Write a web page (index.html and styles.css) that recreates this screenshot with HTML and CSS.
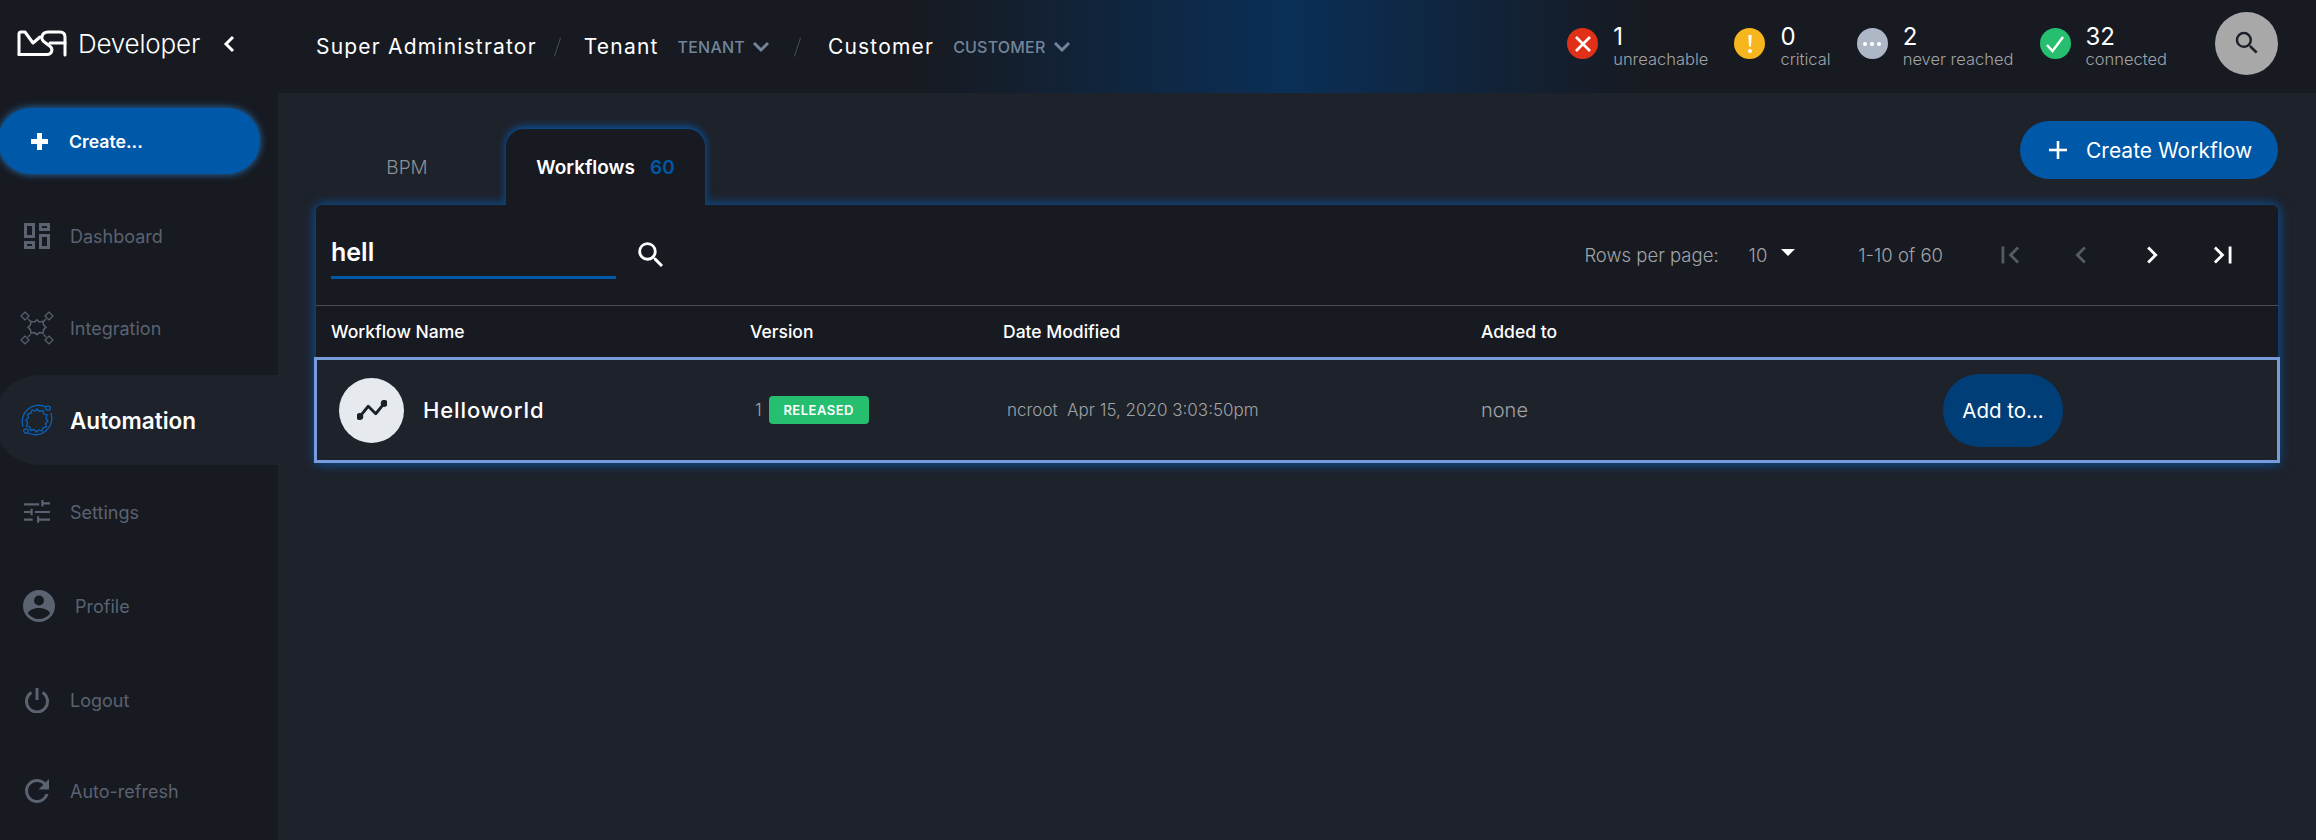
FILE: index.html
```html
<!DOCTYPE html>
<html lang="en">
<head>
    <meta charset="UTF-8">
    <title>MSActivator Developer</title>
    <link rel="stylesheet" href="styles.css">
</head>
<body>
    <header class="topbar">
        <div class="brand">
            <svg class="brand-logo" width="50" height="28" viewBox="0 0 50 28" fill="none" stroke="currentColor" stroke-width="3" stroke-linejoin="round" stroke-linecap="round">
                <path d="M2 24.500V4q0-2 2-2h4l8 11 7-6"></path>
                <path d="M2 24.500h28c5 0 7-6 2-9l-4-3c-5-3-4-10 3-10.500h12q5 0 5 5v18"></path>
                <path d="M33 13h15"></path>
            </svg>
            <span class="brand-name">Developer</span>
            <svg class="brand-toggle" width="14" height="20" viewBox="0 0 14 20" fill="none" stroke="currentColor" stroke-width="3"><polyline points="11 3 4 10 11 17"></polyline></svg>
        </div>
        <nav class="crumbs">
            <span class="crumb">Super Administrator</span>
            <span class="crumb-sep"></span>
            <span class="crumb">Tenant</span>
            <span class="crumb-select">TENANT
                <svg width="18" height="12" viewBox="0 0 18 12" fill="none" stroke="currentColor" stroke-width="3"><polyline points="2 2 9 9 16 2"></polyline></svg>
            </span>
            <span class="crumb-sep"></span>
            <span class="crumb">Customer</span>
            <span class="crumb-select">CUSTOMER
                <svg width="18" height="12" viewBox="0 0 18 12" fill="none" stroke="currentColor" stroke-width="3"><polyline points="2 2 9 9 16 2"></polyline></svg>
            </span>
        </nav>
        <div class="statuses">
            <div class="status status-red">
                <span class="status-dot"><svg width="20" height="20" viewBox="0 0 20 20" stroke="#fff" stroke-width="2.600"><line x1="3" y1="3" x2="17" y2="17"></line><line x1="17" y1="3" x2="3" y2="17"></line></svg></span>
                <div class="status-text"><b>1</b><small>unreachable</small></div>
            </div>
            <div class="status status-amber">
                <span class="status-dot"><svg width="20" height="24" viewBox="0 0 20 24" fill="#fff"><path d="M8.300 3h3.400l-.7 11.500H9z"></path><circle cx="10" cy="19" r="2"></circle></svg></span>
                <div class="status-text"><b>0</b><small>critical</small></div>
            </div>
            <div class="status status-grey">
                <span class="status-dot"><svg width="20" height="6" viewBox="0 0 20 6" fill="#fff"><circle cx="3" cy="3" r="2"></circle><circle cx="10" cy="3" r="2"></circle><circle cx="17" cy="3" r="2"></circle></svg></span>
                <div class="status-text"><b>2</b><small>never reached</small></div>
            </div>
            <div class="status status-green">
                <span class="status-dot"><svg width="22" height="20" viewBox="0 0 22 20" fill="none" stroke="#fff" stroke-width="2.400"><polyline points="3 11 8.500 17 19 3"></polyline></svg></span>
                <div class="status-text"><b>32</b><small>connected</small></div>
            </div>
            <button class="top-search" type="button" aria-label="Search">
                <svg width="30" height="30" viewBox="0 0 24 24" fill="#1b1f27"><path d="M15.500 14h-.79l-.28-.27A6.470 6.470 0 0 0 16 9.500 6.500 6.500 0 1 0 9.500 16c1.610 0 3.090-.59 4.230-1.570l.27.28v.79l5 4.990L20.490 19l-4.990-5zm-6 0C7.010 14 5 11.990 5 9.500S7.010 5 9.500 5 14 7.010 14 9.500 11.990 14 9.500 14z"></path></svg>
            </button>
        </div>
    </header>

    <div class="layout">
        <aside class="sidebar">
            <button class="create-btn" type="button">
                <svg width="17" height="17" viewBox="0 0 17 17" fill="#fff"><path d="M6 0h5v6h6v5h-6v6H6v-6H0V6h6z"></path></svg>
                Create...
            </button>
            <ul class="side-nav">
                <li class="side-item">
                    <svg class="side-icon" width="26" height="26" viewBox="0 0 26 26" fill="none" stroke="currentColor" stroke-width="3"><rect x="1.500" y="1.500" width="8" height="12"></rect><rect x="16.500" y="1.500" width="8" height="5"></rect><rect x="1.500" y="19.500" width="8" height="5"></rect><rect x="16.500" y="12.500" width="8" height="12"></rect></svg>
                    Dashboard
                </li>
                <li class="side-item">
                    <svg class="side-icon side-icon-wide" width="34" height="34" viewBox="0 0 34 34" fill="none" stroke="currentColor" stroke-width="1.200">
                        <path d="M17 10l2 2 3-.6.600 3 2 2-2 2-.6 3-3-.6-2 2-2-2-3 .6-.6-3-2-2 2-2 .6-3 3 .6z" transform="translate(17 17) scale(1.180) translate(-17 -17)"></path>
                        <path d="M5 1l4 4-4 4-4-4zM29 1l4 4-4 4-4-4zM5 25l4 4-4 4-4-4zM29 25l4 4-4 4-4-4z"></path>
                        <path d="M8 8l2.500 2.500M26 8l-2.500 2.500M8 26l2.500-2.500M26 26l-2.500-2.500"></path>
                    </svg>
                    Integration
                </li>
                <li class="side-item side-item-active">
                    <svg class="side-icon side-icon-wide" width="34" height="34" viewBox="0 0 34 34" fill="none" stroke="#0a62b8" stroke-width="1.300">
                        <path d="M17 6l2.500 2.500 3.400-.9.900 3.400 3.200 1-1 3.400L28 18l-2.500 2.500.9 3.400-3.400.9-1 3.200-3.400-1L16.500 29 14 26.500l-3.400.9-.9-3.400-3.200-1 1-3.400L6 17l2.500-2.500-.9-3.400 3.400-.9 1-3.200 3.400 1z"></path>
                        <path d="M26 4A16.500 16.500 0 0 0 3 24"></path>
                        <path d="M8 30A16.500 16.500 0 0 0 31 10"></path>
                        <circle cx="28" cy="5" r="2.200"></circle>
                        <circle cx="6" cy="28" r="2.200"></circle>
                    </svg>
                    Automation
                </li>
                <li class="side-item">
                    <svg class="side-icon" width="26" height="24" viewBox="0 0 24 22" fill="currentColor"><path d="M0 17v2h8v-2H0zM0 3v2h14V3H0zm14 18v-2h10v-2H14v-2h-2v6h2zM6 8v2H0v2h6v2h2V8H6zm18 4v-2H10v2h14zM16 6h2V4h6V2h-6V0h-2v6z"></path></svg>
                    Settings
                </li>
                <li class="side-item side-item-profile">
                    <svg class="side-icon side-icon-profile" width="32" height="32" viewBox="0 0 32 32" fill="currentColor"><path d="M16 0a16 16 0 1 0 0 32 16 16 0 0 0 0-32zm0 5.500a5 5 0 1 1 0 10 5 5 0 0 1 0-10zm0 23.500c-4.500 0-8.500-2-11-5.500 0-3.500 7.400-5.500 11-5.500s11 2 11 5.500c-2.500 3.500-6.500 5.500-11 5.500z"></path></svg>
                    Profile
                </li>
                <li class="side-item side-item-logout">
                    <svg class="side-icon" width="26" height="26" viewBox="0 0 26 26" fill="none" stroke="currentColor" stroke-width="3"><path d="M13 1v12"></path><path d="M7.500 5.500a10.500 10.500 0 1 0 11 0"></path></svg>
                    Logout
                </li>
                <li class="side-item">
                    <svg class="side-icon side-icon-refresh" width="36" height="36" viewBox="0 0 24 24" fill="currentColor"><path d="M17.650 6.350A7.960 7.960 0 0 0 12 4a8 8 0 1 0 7.730 10h-2.080A6 6 0 1 1 12 6c1.660 0 3.140.69 4.220 1.780L13 11h7V4l-2.350 2.350z"></path></svg>
                    Auto-refresh
                </li>
            </ul>
        </aside>

        <main class="content">
            <div class="tabs-row">
                <div class="tabs">
                    <div class="tab tab-plain">BPM</div>
                    <div class="tab tab-active">Workflows <span class="tab-count">60</span></div>
                </div>
                <button class="add-workflow" type="button">
                    <svg width="20" height="20" viewBox="0 0 20 20" stroke="#fff" stroke-width="2.600"><line x1="10" y1="1" x2="10" y2="19"></line><line x1="1" y1="10" x2="19" y2="10"></line></svg>
                    Create Workflow
                </button>
            </div>

            <section class="card">
                <div class="toolbar">
                    <div class="search-field">hell</div>
                    <svg class="search-icon" width="34" height="34" viewBox="0 0 24 24" fill="#fff"><path d="M15.500 14h-.79l-.28-.27A6.470 6.470 0 0 0 16 9.500 6.500 6.500 0 1 0 9.500 16c1.610 0 3.090-.59 4.230-1.570l.27.28v.79l5 4.990L20.490 19l-4.990-5zm-6 0C7.010 14 5 11.990 5 9.500S7.010 5 9.500 5 14 7.010 14 9.500 11.990 14 9.500 14z"></path></svg>
                    <div class="pager">
                        <span class="pager-label">Rows per page:</span>
                        <span class="pager-size">10</span>
                        <span class="pager-caret"></span>
                        <span class="pager-range">1-10 of 60</span>
                        <div class="pager-btns">
                            <svg class="pager-off" width="34" height="34" viewBox="0 0 24 24" fill="currentColor"><path d="M18.410 16.590L13.820 12l4.590-4.590L17 6l-6 6 6 6zM6 6h2v12H6z"></path></svg>
                            <svg class="pager-off" width="34" height="34" viewBox="0 0 24 24" fill="currentColor"><path d="M15.410 7.410L14 6l-6 6 6 6 1.410-1.410L10.830 12z"></path></svg>
                            <svg width="34" height="34" viewBox="0 0 24 24" fill="currentColor"><path d="M10 6L8.590 7.410 13.170 12l-4.580 4.590L10 18l6-6z"></path></svg>
                            <svg width="34" height="34" viewBox="0 0 24 24" fill="currentColor"><path d="M5.590 7.410L10.180 12l-4.590 4.590L7 18l6-6-6-6zM16 6h2v12h-2z"></path></svg>
                        </div>
                    </div>
                </div>
                <div class="table-head">
                    <span class="col-name">Workflow Name</span>
                    <span class="col-version">Version</span>
                    <span class="col-date">Date Modified</span>
                    <span class="col-added">Added to</span>
                </div>
                <div class="table-row">
                    <div class="col-name row-name">
                        <span class="row-avatar">
                            <svg width="30" height="20" viewBox="0 0 32 20" fill="none" stroke="#1b1f27" stroke-width="3" stroke-linejoin="round" stroke-linecap="round"><polyline points="3 17 12 6 20 14 29 3"></polyline><circle cx="3" cy="17" r="2.200" fill="#1b1f27"></circle><circle cx="29" cy="3" r="2.200" fill="#1b1f27"></circle></svg>
                        </span>
                        Helloworld
                    </div>
                    <div class="col-version row-version">1 <span class="badge">RELEASED</span></div>
                    <div class="col-date row-date">ncroot&nbsp; Apr 15, 2020 3:03:50pm</div>
                    <div class="col-added row-added">none</div>
                    <button class="add-to" type="button">Add to...</button>
                </div>
            </section>
        </main>
    </div>
</body>
</html>
```

FILE: styles.css
```css
:root {
    --primary: #0058a8;
    --bar: #171a21;
    --surface: #1e222a;
    --muted: #5b6270;
    --text-grey: #a0a3a8;
}
* {
    box-sizing: border-box;
}
body {
    margin: 0;
    height: 840px;
    overflow: hidden;
    display: flex;
    flex-direction: column;
    background: var(--surface);
    color: #fff;
    font-family: 'Inter', 'Liberation Sans', sans-serif;
}
button {
    font-family: inherit;
    border: none;
    color: #fff;
}

/* top bar */
.topbar {
    height: 93px;
    flex: none;
    display: flex;
    align-items: center;
    background: linear-gradient(90deg, var(--bar) 920px, #0a2f57 1290px, var(--bar) 1640px);
}
.brand {
    width: 316px;
    flex: none;
    display: flex;
    align-items: center;
    padding-left: 17px;
    padding-bottom: 6px;
}
.brand-logo {
    flex: none;
}
.brand-name {
    margin-left: 11px;
    font-size: 26px;
    font-weight: 300;
    letter-spacing: -0.2px;
}
.brand-toggle {
    margin-left: 22px;
}
.crumbs {
    display: flex;
    align-items: center;
    font-size: 21px;
    font-weight: 400;
}
.crumb {
    letter-spacing: 1.2px;
}
.crumb-sep {
    width: 1px;
    height: 20px;
    margin: 0 26px 0 20px;
    background: #444a55;
    transform: rotate(18deg);
}
.crumb-select {
    display: flex;
    align-items: center;
    gap: 7px;
    margin-left: 19px;
    font-size: 16px;
    font-weight: 500;
    letter-spacing: 0.2px;
    color: #72859a;
}
.crumb-select + .crumb-sep {
    margin-left: 27px;
    margin-right: 30px;
}
.statuses {
    margin-left: auto;
    margin-right: 38px;
    display: flex;
    align-items: center;
}
.status {
    display: flex;
    align-items: center;
    gap: 15px;
    margin-right: 26px;
}
.status-dot {
    width: 31px;
    height: 31px;
    margin-bottom: 6px;
    border-radius: 50%;
    display: flex;
    align-items: center;
    justify-content: center;
}
.status-red .status-dot { background: #e03017; }
.status-amber .status-dot { background: #f8b61e; }
.status-grey .status-dot { background: #aeb7c6; }
.status-green .status-dot { background: #26bf6f; }
.status-text {
    display: flex;
    flex-direction: column;
    line-height: 1;
}
.status-text b {
    font-size: 24px;
    font-weight: 400;
}
.status-text small {
    margin-top: 2px;
    font-size: 16.500px;
    font-weight: 300;
    color: var(--text-grey);
}
.top-search {
    width: 63px;
    height: 63px;
    margin-left: 22px;
    margin-bottom: 7px;
    padding: 0;
    border-radius: 50%;
    background: #a8a8a8;
    display: flex;
    align-items: center;
    justify-content: center;
}

/* sidebar */
.layout {
    flex: 1;
    display: flex;
    min-height: 0;
}
.sidebar {
    width: 278px;
    flex: none;
    background: var(--bar);
    padding-top: 15px;
    overflow: hidden;
}
.create-btn {
    width: 262px;
    height: 66px;
    margin-left: -2px;
    padding: 0 0 0 33px;
    display: flex;
    align-items: center;
    gap: 21px;
    border-radius: 33px;
    background: var(--primary);
    box-shadow: 0 0 7px 1px rgba(42, 130, 210, 0.7);
    font-size: 17.700px;
    font-weight: 600;
}
.side-nav {
    list-style: none;
    margin: 16px 0 0;
    padding: 0;
}
.side-item {
    height: 92px;
    display: flex;
    align-items: center;
    gap: 20px;
    padding-left: 24px;
    font-size: 18px;
    color: var(--muted);
}
.side-icon-wide {
    margin-left: -4px;
    margin-right: -4px;
}
.side-icon-refresh {
    margin-left: -5px;
    margin-right: -5px;
}
.side-item-active {
    height: 90px;
    margin: 1px 0 1px -6px;
    padding-left: 30px;
    border-radius: 45px 0 0 45px;
    background: var(--surface);
    font-size: 22.500px;
    font-weight: 600;
    color: #fff;
}
.side-item-profile {
    margin-top: 2px;
    gap: 20px;
    padding-left: 23px;
}
.side-item-logout {
    margin-top: 2px;
    margin-bottom: -1px;
}

/* main */
.content {
    flex: 1;
    padding: 28px 38px 0;
    min-width: 0;
}
.tabs-row {
    height: 84px;
    display: flex;
    justify-content: space-between;
}
.tabs {
    display: flex;
    align-items: flex-end;
    position: relative;
    z-index: 1;
}
.tab {
    width: 190px;
    height: 76px;
    display: flex;
    align-items: center;
    justify-content: center;
    font-size: 19px;
    font-weight: 300;
    color: #8b8f96;
}
.tab-plain {
    padding-right: 8px;
}
.tab-active {
    width: 199px;
    border-radius: 18px 18px 0 0;
    background: var(--bar);
    box-shadow: 0 -2px 9px rgba(0, 100, 200, 0.85);
    clip-path: inset(-14px -14px 0 -14px);
    font-weight: 600;
    color: #fff;
}
.tab-count {
    margin-left: 15px;
    color: var(--primary);
}
.add-workflow {
    width: 258px;
    height: 58px;
    padding: 0 0 0 28px;
    display: flex;
    align-items: center;
    gap: 18px;
    border-radius: 29px;
    background: var(--primary);
    font-size: 21px;
    font-weight: 400;
}

/* card */
.card {
    background: var(--bar);
    border-radius: 6px 6px 0 0;
    box-shadow: 0 0 12px 1px rgba(0, 100, 200, 0.75);
}
.toolbar {
    height: 101px;
    padding: 0 15px;
    display: flex;
    align-items: center;
    border-bottom: 1px solid #4a4d52;
}
.search-field {
    width: 285px;
    height: 49px;
    margin-top: -2px;
    font-size: 25px;
    font-weight: 600;
    line-height: 44px;
    border-bottom: 3px solid var(--primary);
}
.search-icon {
    margin-left: 18px;
}
.pager {
    margin-left: auto;
    margin-right: 23px;
    display: flex;
    align-items: center;
    font-size: 18.500px;
    font-weight: 300;
    color: var(--text-grey);
}
.pager-size {
    margin-left: 30px;
}
.pager-caret {
    width: 0;
    height: 0;
    margin-left: 14px;
    margin-bottom: 5px;
    border-left: 7px solid transparent;
    border-right: 7px solid transparent;
    border-top: 7px solid #fff;
}
.pager-range {
    margin-left: 63px;
}
.pager-btns {
    margin-left: 50px;
    display: flex;
    gap: 37px;
    color: #fff;
}
.pager-off {
    color: #555a63;
}
.table-head {
    height: 51px;
    display: flex;
    align-items: center;
    padding-left: 15px;
    font-size: 17.500px;
    font-weight: 500;
}
.col-name { width: 419px; flex: none; }
.col-version { width: 253px; flex: none; }
.col-date { width: 478px; flex: none; }
.col-added { flex: none; }
.table-row {
    height: 106px;
    margin: 0 -2px;
    display: flex;
    align-items: center;
    padding-left: 14px;
    border: 3px solid #779cd9;
    background: var(--surface);
}
.row-name {
    display: flex;
    align-items: center;
    gap: 19px;
    font-size: 22px;
    font-weight: 500;
    letter-spacing: 0.9px;
}
.row-avatar {
    width: 65px;
    height: 65px;
    margin-left: 8px;
    border-radius: 50%;
    background: #e6e9ee;
    display: flex;
    align-items: center;
    justify-content: center;
}
.row-version {
    display: flex;
    align-items: center;
    gap: 7px;
    padding-left: 5px;
    font-size: 17px;
    font-weight: 300;
    color: var(--text-grey);
}
.badge {
    width: 100px;
    height: 28px;
    border-radius: 4px;
    background: #26bf6f;
    display: flex;
    align-items: center;
    justify-content: center;
    font-size: 13px;
    font-weight: 600;
    letter-spacing: 0.5px;
    color: #fff;
}
.row-date {
    padding-left: 4px;
    font-size: 17px;
    font-weight: 300;
    color: var(--text-grey);
}
.row-added {
    width: 462px;
    font-size: 20px;
    font-weight: 300;
    color: var(--text-grey);
}
.add-to {
    width: 120px;
    height: 73px;
    padding: 0;
    border-radius: 36px;
    background: #003e78;
    font-size: 20.500px;
}
```
